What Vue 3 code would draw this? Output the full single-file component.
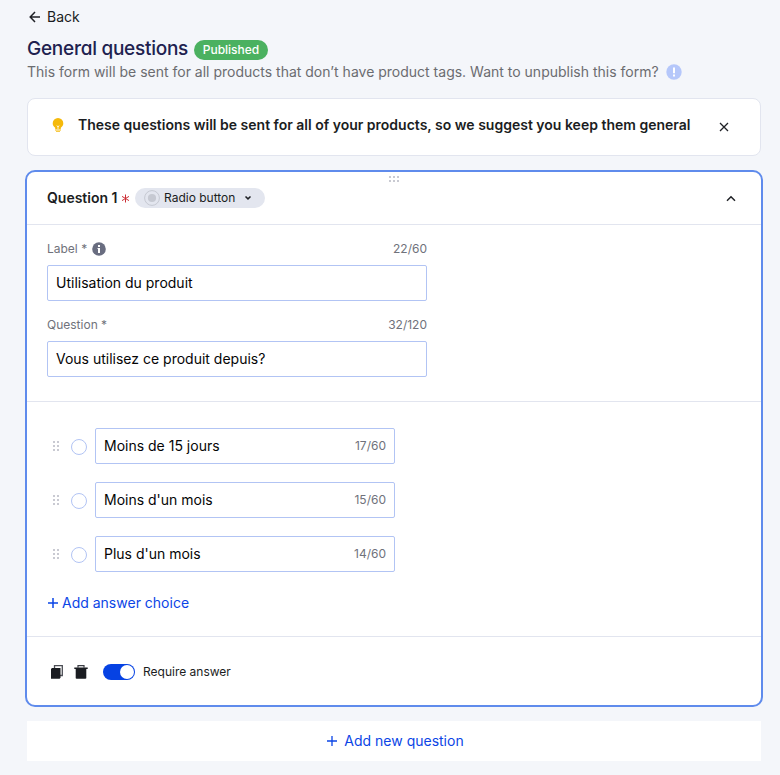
<script setup>
import { ref } from 'vue'

const fields = ref([
  { label: 'Label *', info: true, value: 'Utilisation du produit', count: '22/60' },
  { label: 'Question *', info: false, value: 'Vous utilisez ce produit depuis?', count: '32/120' },
])
const choices = ref([
  { value: 'Moins de 15 jours', count: '17/60' },
  { value: "Moins d'un mois", count: '15/60' },
  { value: "Plus d'un mois", count: '14/60' },
])
</script>

<template>
  <main class="page">
    <a class="back">
      <svg width="12" height="12" viewBox="0 0 12 12" fill="none" stroke="#1f2126" stroke-width="1.5">
        <path d="M11 6H1.5M6 1L1.2 6L6 11" />
      </svg>
      <span>Back</span>
    </a>

    <header class="heading">
      <h1>General questions</h1>
      <span class="badge"><span>Published</span></span>
    </header>
    <p class="intro">
      <span class="intro-text">This form will be sent for all products that don’t have product tags. Want to unpublish this form?</span>
      <svg width="16" height="16" viewBox="0 0 16 16">
        <circle cx="8" cy="8" r="7.7" fill="#b5c7fa" />
        <path d="M7 3.5h2v5.7H7zM7 10.6h2v1.9H7z" fill="#fff" />
      </svg>
    </p>

    <section class="banner">
      <svg class="bulb" width="12" height="16" viewBox="0 0 12 16">
        <path d="M6 1A5.300 5.300 0 0 0 .7 6.300c0 2 .9 3.300 2.500 4.400V12h5.600v-1.300c1.600-1.100 2.500-2.400 2.500-4.400A5.300 5.300 0 0 0 6 1z" fill="#f5b90a" />
        <path d="M6 12V9M4.700 8.700L6 9.700l1.300-1" fill="none" stroke="#fff" stroke-width=".8" />
        <path d="M3 12.500h6v1H3zM4 14.200h4v.9H4z" fill="#f5b90a" />
      </svg>
      <span class="banner-text">These questions will be sent for all of your products, so we suggest you keep them general</span>
      <svg class="close" width="10" height="10" viewBox="0 0 10 10" fill="none" stroke="#1f2126" stroke-width="1.300">
        <path d="M1 1l8 8M9 1L1 9" />
      </svg>
    </section>

    <section class="card">
      <div class="card-head">
        <svg class="card-grip" width="12" height="8" viewBox="0 0 12 8" fill="#c9cad2">
          <path d="M1 1h2v2H1zM5 1h2v2H5zM9 1h2v2H9zM1 5h2v2H1zM5 5h2v2H5zM9 5h2v2H9z" />
        </svg>
        <h2>Question 1</h2>
        <svg class="required" width="9" height="9" viewBox="0 0 9 9" stroke="#cc2f36" stroke-width="1">
          <path d="M4.500 .5v8M1 2.400l7 4.200M8 2.400L1 6.600" />
        </svg>
        <button class="type">
          <svg width="16" height="16" viewBox="0 0 16 16">
            <circle cx="8" cy="8" r="7.400" fill="none" stroke="#c6c9d2" />
            <circle cx="8" cy="8" r="4.100" fill="#c6c9d2" />
          </svg>
          <span class="type-text">Radio button</span>
          <svg class="caret" width="8" height="6" viewBox="0 0 8 6" fill="none" stroke="#1f2126" stroke-width="1.500">
            <path d="M1.500 1.500L4 3.900L6.500 1.500" />
          </svg>
        </button>
        <svg class="collapse" width="10" height="8" viewBox="0 0 10 8" fill="none" stroke="#1f2126" stroke-width="1.500">
          <path d="M1 6.700L5 2.700L9 6.700" />
        </svg>
      </div>

      <div class="fields">
        <div v-for="f in fields" :key="f.label" class="field">
          <div class="field-head">
            <span class="field-label">{{ f.label }}</span>
            <svg v-if="f.info" width="14" height="14" viewBox="0 0 14 14">
              <circle cx="7" cy="7" r="6.800" fill="#696d80" />
              <path d="M6 3h2v2H6zM5.500 6H8v5H6V7h-.5z" fill="#fff" />
            </svg>
            <span class="count">{{ f.count }}</span>
          </div>
          <div class="box"><span>{{ f.value }}</span></div>
        </div>
      </div>

      <div class="choices">
        <div v-for="c in choices" :key="c.value" class="choice">
          <svg width="8" height="12" viewBox="0 0 8 12" fill="#c9cad2">
            <path d="M1 1h2v2H1zM5 1h2v2H5zM1 5h2v2H1zM5 5h2v2H5zM1 9h2v2H1zM5 9h2v2H5z" />
          </svg>
          <span class="radio"></span>
          <div class="box">
            <span>{{ c.value }}</span>
            <span class="count">{{ c.count }}</span>
          </div>
        </div>
        <a class="add-choice">
          <svg width="10" height="10" viewBox="0 0 10 10" stroke="#0b45e6" stroke-width="1.500">
            <path d="M5 0v10M0 5h10" />
          </svg>
          <span>Add answer choice</span>
        </a>
      </div>

      <footer class="card-foot">
        <svg width="12" height="14" viewBox="0 0 12 14">
          <path d="M3.500 3V.7h7.800v9.800H9" fill="none" stroke="#4b4d54" stroke-width="1.300" />
          <path d="M0 4l1-1h8.500v9.500l-.8 1.300H0z" fill="#1a1c21" />
        </svg>
        <svg class="trash" width="14" height="14" viewBox="0 0 14 14" fill="#1a1c21">
          <path d="M.3 2.600h13.400V4h-1.400v9.200l-.8.600h-9l-.8-.6V4H.3z" />
          <path d="M4 2.800V.7h6v2.100" fill="none" stroke="#3b3d44" stroke-width="1.200" />
        </svg>
        <span class="toggle"></span>
        <span class="require">Require answer</span>
      </footer>
    </section>

    <button class="add-question">
      <svg width="10" height="10" viewBox="0 0 10 10" stroke="#0b45e6" stroke-width="1.300">
        <path d="M5 0v10M0 5h10" />
      </svg>
      <span>Add new question</span>
    </button>
  </main>
</template>

<style>
body {
  background: #f4f6fa;
}
</style>

<style scoped>
.page {
  box-sizing: border-box;
  height: 775px;
  padding: 7px 17px 0 25px;
  background: #f4f6fa;
  color: #1b1d22;
  font: 14px/20px Inter, "Liberation Sans", sans-serif;
  white-space: nowrap;
  overflow: hidden;
}
svg {
  flex: none;
  display: block;
}
h1, h2, p {
  margin: 0;
}
button {
  font: inherit;
  border: 0;
  padding: 0;
  margin: 0;
}
.back {
  display: flex;
  align-items: center;
  gap: 6px;
  height: 20px;
  padding-left: 4px;
}
.heading {
  display: flex;
  align-items: center;
  gap: 6px;
  height: 24px;
  margin-top: 10px;
  padding-left: 2px;
}
h1 {
  width: 161px;
  color: #20214f;
  font-size: 19px;
  font-weight: 500;
  line-height: 24px;
  letter-spacing: -0.26px;
  font-feature-settings: "cv11", "ss03";
}
.badge {
  box-sizing: border-box;
  width: 74px;
  height: 20px;
  margin-top: 2px;
  border-radius: 10px;
  background: #4bb160;
  color: #fff;
  font-size: 12px;
  font-weight: 500;
  text-align: center;
}
.intro {
  display: flex;
  align-items: center;
  height: 20px;
  margin-top: 1px;
  padding-left: 2px;
  color: #6b6c70;
}
.intro-text {
  width: 639px;
}
.banner {
  box-sizing: border-box;
  display: flex;
  align-items: center;
  height: 58px;
  margin: 16px 2px 0;
  padding: 0 31px 4px 24px;
  border: 1px solid #e2e5ef;
  border-radius: 8px;
  background: #fff;
}
.bulb {
  margin-right: 14px;
}
.banner-text {
  font-weight: 600;
}
.close {
  margin: 4px 0 0 auto;
}
.card {
  box-sizing: border-box;
  height: 537px;
  margin-top: 14px;
  border: 2px solid #5f8bec;
  border-radius: 10px;
  background: #fff;
}
.card-head {
  position: relative;
  display: flex;
  align-items: center;
  height: 52px;
  padding: 0 25px 0 20px;
  border-bottom: 1px solid #e2e5ef;
}
.card-grip {
  position: absolute;
  top: 3px;
  left: 361px;
}
h2 {
  width: 74px;
  font-size: 14px;
  font-weight: 600;
  line-height: 20px;
}
.required {
  margin: 1px 6px 0 0;
}
.type {
  display: flex;
  align-items: center;
  width: 130px;
  height: 20px;
  margin-left: -1px;
  padding-left: 9px;
  border-radius: 10px;
  background: #e3e6ef;
  color: #1b1d22;
  font-size: 12px;
}
.type-text {
  width: 72px;
  margin-left: 4px;
  text-align: left;
}
.caret {
  margin-left: 8px;
}
.collapse {
  margin-left: auto;
}
.fields {
  display: flex;
  flex-direction: column;
  gap: 16px;
  padding: 16px 20px 24px;
  border-bottom: 1px solid #e2e5ef;
}
.field {
  width: 380px;
}
.field-head {
  display: flex;
  align-items: center;
  gap: 5px;
  height: 16px;
  margin-bottom: 8px;
  color: #70727b;
  font-size: 12px;
  line-height: 16px;
}
.count {
  margin-left: auto;
  color: #70727b;
  font-size: 12px;
}
.box {
  box-sizing: border-box;
  display: flex;
  align-items: center;
  width: 380px;
  height: 36px;
  padding: 0 8px;
  border: 1px solid #b2c4f4;
  border-radius: 2px;
  color: #050506;
}
.choices {
  display: flex;
  flex-direction: column;
  gap: 18px;
  padding: 26px 20px 23px;
  border-bottom: 1px solid #e2e5ef;
}
.choice {
  display: flex;
  align-items: center;
  padding-left: 5px;
}
.choice .box {
  width: 300px;
}
.radio {
  box-sizing: border-box;
  width: 16px;
  height: 16px;
  margin: 2px 8px 0 11px;
  border: 1px solid #b2c4f4;
  border-radius: 50%;
}
.add-choice {
  display: flex;
  align-items: center;
  gap: 4px;
  height: 20px;
  margin-top: 3px;
  padding-left: 1px;
  color: #0b45e6;
}
.card-foot {
  display: flex;
  align-items: center;
  height: 68px;
  padding-left: 24px;
  padding-top: 1px;
}
.trash {
  margin-left: 11px;
}
.toggle {
  box-sizing: border-box;
  display: flex;
  justify-content: flex-end;
  width: 32px;
  height: 16px;
  margin: 0 8px 0 15px;
  padding: 1px;
  border-radius: 8px;
  background: #0642e3;
}
.toggle::before {
  content: "";
  width: 14px;
  height: 14px;
  border-radius: 50%;
  background: #fff;
}
.require {
  font-size: 12px;
}
.add-question {
  box-sizing: border-box;
  display: flex;
  align-items: center;
  justify-content: center;
  gap: 7px;
  width: 734px;
  height: 40px;
  margin: 14px 2px 0;
  padding-left: 3px;
  background: #fff;
  color: #0b45e6;
}
</style>
